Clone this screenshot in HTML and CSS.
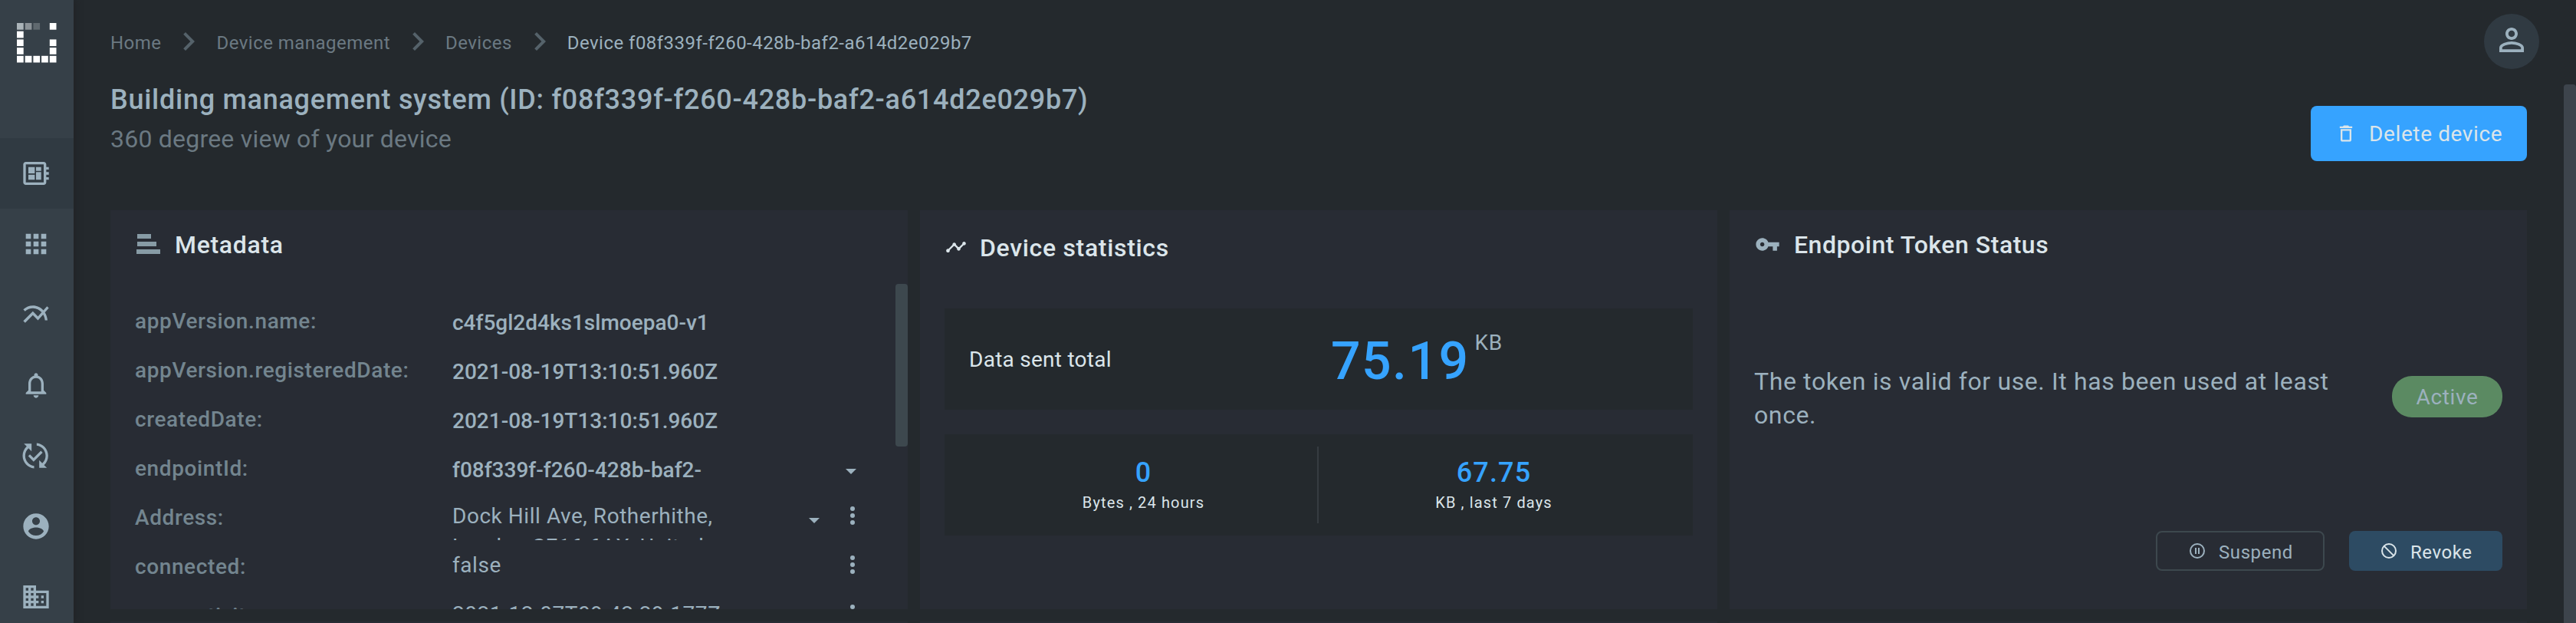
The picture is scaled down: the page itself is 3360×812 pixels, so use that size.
FILE: index.html
```html
<!DOCTYPE html>
<html lang="en">
<head>
<meta charset="utf-8">
<title>Device</title>
<link rel="stylesheet" href="styles.css">
</head>
<body>
<div class="app">
  <nav class="sidebar">
    <div class="brand">
      <svg class="logo" viewBox="0 0 51.6 51.6" fill="#fff">
        <rect width="8.7" height="8.7" fill="#abb4b9"/><rect x="10.7" width="8.7" height="8.7" fill="#8c9398"/><rect x="21.4" width="8.7" height="8.7" fill="#60696f"/><rect x="42.8" width="8.7" height="8.7"/>
        <rect y="10.7" width="8.7" height="8.7"/>
        <rect y="21.4" width="8.7" height="8.7"/><rect x="42.8" y="21.4" width="8.7" height="8.7"/>
        <rect y="32.1" width="8.7" height="8.7"/><rect x="42.8" y="32.1" width="8.7" height="8.7"/>
        <rect y="42.8" width="8.7" height="8.7"/><rect x="10.7" y="42.8" width="8.7" height="8.7"/><rect x="21.4" y="42.8" width="8.7" height="8.7"/><rect x="32.1" y="42.8" width="8.7" height="8.7"/><rect x="42.8" y="42.8" width="8.7" height="8.7"/>
      </svg>
    </div>
    <a class="nav-item active"><svg viewBox="0 0 24 24"><path d="M22 9V7h-2V5c0-1.1-.9-2-2-2H4c-1.1 0-2 .9-2 2v14c0 1.1.9 2 2 2h14c1.1 0 2-.9 2-2v-2h2v-2h-2v-2h2v-2h-2V9h2zm-4 10H4V5h14v14zM6 13h5v4H6v-4zm6-6h4v3h-4V7zM6 7h5v5H6V7zm6 4h4v6h-4v-6z"/></svg></a>
    <a class="nav-item"><svg viewBox="0 0 24 24"><path d="M4 8h4V4H4v4zm6 12h4v-4h-4v4zm-6 0h4v-4H4v4zm0-6h4v-4H4v4zm6 0h4v-4h-4v4zm6-10v4h4V4h-4zm-6 4h4V4h-4v4zm6 6h4v-4h-4v4zm0 6h4v-4h-4v4z"/></svg></a>
    <a class="nav-item"><svg viewBox="0 0 24 24"><path d="M22 6.92l-1.41-1.41-2.85 3.21C15.68 6.4 12.83 5 9.61 5 6.72 5 4.07 6.16 2 8l1.42 1.42C5.12 7.93 7.27 7 9.61 7c2.74 0 5.09 1.26 6.77 3.24l-2.88 3.24-4-4L2 16.99l1.5 1.5 6-6.01 4 4 4.05-4.55c.75 1.35 1.25 2.9 1.44 4.55H21c-.22-2.3-.95-4.39-2.04-6.14L22 6.92z"/></svg></a>
    <a class="nav-item"><svg viewBox="0 0 24 24"><path d="M12 22c1.1 0 2-.9 2-2h-4c0 1.1.9 2 2 2zm6-6v-5c0-3.07-1.63-5.64-4.5-6.32V4c0-.83-.67-1.5-1.5-1.5s-1.5.67-1.5 1.5v.68C7.64 5.36 6 7.92 6 11v5l-2 2v1h16v-1l-2-2zm-2 1H8v-6c0-2.48 1.51-4.5 4-4.5s4 2.02 4 4.5v6z"/></svg></a>
    <a class="nav-item"><svg viewBox="0.5 0 24 24"><path d="M17.66 9.53l-7.07 7.07-4.24-4.24 1.41-1.41 2.83 2.83 5.66-5.66 1.41 1.41zM4 12c0-2.33 1.02-4.42 2.62-5.88L9 8.5v-6H3l2.2 2.2C3.24 6.52 2 9.11 2 12c0 5.19 3.95 9.45 9 9.95v-2.02c-3.94-.49-7-3.86-7-7.93zm18 0c0-5.19-3.95-9.45-9-9.95v2.02c3.94.49 7 3.86 7 7.93 0 2.33-1.02 4.42-2.62 5.88L15 15.5v6h6l-2.2-2.2c1.96-1.82 3.2-4.41 3.2-7.3z"/></svg></a>
    <a class="nav-item"><svg viewBox="0 0 24 24"><path d="M12 2C6.48 2 2 6.48 2 12s4.48 10 10 10 10-4.48 10-10S17.52 2 12 2zm0 3c1.66 0 3 1.34 3 3s-1.34 3-3 3-3-1.34-3-3 1.34-3 3-3zm0 14.2c-2.5 0-4.71-1.28-6-3.22.03-1.99 4-3.08 6-3.08 1.99 0 5.97 1.09 6 3.08-1.29 1.94-3.5 3.22-6 3.22z"/></svg></a>
    <a class="nav-item"><svg viewBox="0 0 24 24"><path d="M12 7V3H2v18h20V7H12zM6 19H4v-2h2v2zm0-4H4v-2h2v2zm0-4H4V9h2v2zm0-4H4V5h2v2zm4 12H8v-2h2v2zm0-4H8v-2h2v2zm0-4H8V9h2v2zm0-4H8V5h2v2zm10 12h-8v-2h2v-2h-2v-2h2v-2h-2V9h8v10zm-2-8h-2v2h2v-2zm0 4h-2v2h2v-2z"/></svg></a>
  </nav>

  <main class="main">
    <div class="topbar">
      <div class="breadcrumb">
        <span>Home</span>
        <svg viewBox="0 0 24 24"><path d="M10 6L8.59 7.41 13.17 12l-4.58 4.59L10 18l6-6z"/></svg>
        <span>Device management</span>
        <svg viewBox="0 0 24 24"><path d="M10 6L8.59 7.41 13.17 12l-4.58 4.59L10 18l6-6z"/></svg>
        <span>Devices</span>
        <svg viewBox="0 0 24 24"><path d="M10 6L8.59 7.41 13.17 12l-4.58 4.59L10 18l6-6z"/></svg>
        <span class="current">Device f08f339f-f260-428b-baf2-a614d2e029b7</span>
      </div>
      <div class="avatar"><svg viewBox="0 0 24 24"><path d="M12 5.9c1.16 0 2.1.94 2.1 2.1s-.94 2.1-2.1 2.1S9.9 9.16 9.9 8s.94-2.1 2.1-2.1m0 9c2.97 0 6.1 1.46 6.1 2.1v1.1H5.9V17c0-.64 3.13-2.1 6.1-2.1M12 4C9.79 4 8 5.79 8 8s1.79 4 4 4 4-1.79 4-4-1.79-4-4-4zm0 9c-2.67 0-8 1.34-8 4v3h16v-3c0-2.66-5.33-4-8-4z"/></svg></div>
    </div>

    <header class="header">
      <div>
        <h1 class="title">Building management system (ID: f08f339f-f260-428b-baf2-a614d2e029b7)</h1>
        <p class="subtitle">360 degree view of your device</p>
      </div>
      <button class="btn-delete"><svg viewBox="0 0 24 24"><path d="M6 19c0 1.1.9 2 2 2h8c1.1 0 2-.9 2-2V7H6v12zM8 9h8v10H8V9zm7.5-5l-1-1h-5l-1 1H5v2h14V4h-3.5z"/></svg><span>Delete device</span></button>
    </header>

    <div class="cards">
      <section class="card">
        <div class="card-head">
          <svg class="icon-bars" viewBox="0 0 31 26"><path d="M1 0h18v6H1zM1 10h25v6H1zM0 20h31v6H0z"/></svg>
          <h2>Metadata</h2>
        </div>
        <div class="meta">
          <div class="meta-row"><span class="key">appVersion.name:</span><span class="val">c4f5gl2d4ks1slmoepa0-v1</span></div>
          <div class="meta-row"><span class="key">appVersion.registeredDate:</span><span class="val">2021-08-19T13:10:51.960Z</span></div>
          <div class="meta-row"><span class="key">createdDate:</span><span class="val">2021-08-19T13:10:51.960Z</span></div>
          <div class="meta-row"><span class="key">endpointId:</span><span class="val">f08f339f-f260-428b-baf2-</span><svg class="caret last" viewBox="0 0 14 7"><path d="M0 0h14L7 7z"/></svg></div>
          <div class="meta-row"><span class="key">Address:</span><span class="val editable">Dock Hill Ave, Rotherhithe, London SE16 6AX, United</span><svg class="caret" viewBox="0 0 14 7"><path d="M0 0h14L7 7z"/></svg><svg class="dots" viewBox="0 0 24 24"><circle cx="12" cy="6" r="2"/><circle cx="12" cy="12" r="2"/><circle cx="12" cy="18" r="2"/></svg></div>
          <div class="meta-row"><span class="key">connected:</span><span class="val editable">false</span><svg class="dots" viewBox="0 0 24 24"><circle cx="12" cy="6" r="2"/><circle cx="12" cy="12" r="2"/><circle cx="12" cy="18" r="2"/></svg></div>
          <div class="meta-row"><span class="key">connectivity:</span><span class="val editable">2021-12-07T09:42:29.177Z</span><svg class="dots" viewBox="0 0 24 24"><circle cx="12" cy="6" r="2"/><circle cx="12" cy="12" r="2"/><circle cx="12" cy="18" r="2"/></svg></div>
          <div class="thumb"></div>
        </div>
      </section>

      <section class="card">
        <div class="card-head stats-head">
          <svg class="icon-timeline" viewBox="0 0 24 24"><path d="M23 8c0 1.1-.9 2-2 2-.18 0-.35-.02-.51-.07l-3.56 3.55c.05.16.07.34.07.52 0 1.1-.9 2-2 2s-2-.9-2-2c0-.18.02-.36.07-.52l-2.55-2.55c-.16.05-.34.07-.52.07s-.36-.02-.52-.07l-4.55 4.56c.05.16.07.33.07.51 0 1.1-.9 2-2 2s-2-.9-2-2 .9-2 2-2c.18 0 .35.02.51.07l4.56-4.55C8.02 9.36 8 9.18 8 9c0-1.1.9-2 2-2s2 .9 2 2c0 .18-.02.36-.07.52l2.55 2.55c.16-.05.34-.07.52-.07s.36.02.52.07l3.55-3.56C19.02 8.35 19 8.18 19 8c0-1.1.9-2 2-2s2 .9 2 2z"/></svg>
          <h2>Device statistics</h2>
        </div>
        <div class="stats">
          <div class="panel total">
            <span class="total-label">Data sent total</span>
            <span class="total-value">75.19</span>
            <span class="total-unit">KB</span>
          </div>
          <div class="panel split">
            <div class="stat"><b>0</b><span>Bytes , 24 hours</span></div>
            <div class="divider"></div>
            <div class="stat"><b>67.75</b><span>KB , last 7 days</span></div>
          </div>
        </div>
      </section>

      <section class="card token">
        <div class="card-head">
          <svg class="icon-key" viewBox="0 0 24 24"><path d="M12.65 10C11.83 7.67 9.61 6 7 6c-3.31 0-6 2.69-6 6s2.69 6 6 6c2.61 0 4.83-1.67 5.65-4H17v4h4v-4h2v-4H12.65zM7 14c-1.1 0-2-.9-2-2s.9-2 2-2 2 .9 2 2-.9 2-2 2z"/></svg>
          <h2>Endpoint Token Status</h2>
        </div>
        <div class="status">
          <p>The token is valid for use. It has been used at least once.</p>
          <span class="pill">Active</span>
        </div>
        <div class="actions">
          <button class="btn outline"><svg viewBox="0 0 20 20"><circle cx="10" cy="10" r="9"/><path d="M8 6v8M12 6v8"/></svg><span>Suspend</span></button>
          <button class="btn solid"><svg viewBox="0 0 20 20"><circle cx="10" cy="10" r="9"/><path d="M3.6 3.6l12.8 12.8"/></svg><span>Revoke</span></button>
        </div>
      </section>

      <section class="card"></section>
      <section class="card"></section>
      <section class="card"></section>
    </div>
    <div class="page-thumb"></div>
  </main>
</div>
</body>
</html>
```
FILE: styles.css
```css
* { box-sizing: border-box; }
html, body { margin: 0; height: 100%; overflow: hidden; }
body { background: #24292d; color: #9cb1be; font-family: Roboto, "Liberation Sans", sans-serif; }
h1, h2, p { margin: 0; }
svg { display: block; flex: none; fill: currentColor; }
button { font: inherit; border: 0; margin: 0; }

.app { display: flex; height: 812px; overflow: hidden; }

/* Sidebar */
.sidebar { flex: none; width: 96px; background: #364048; box-shadow: 2px 0 8px rgba(32, 32, 34, .6); }
.brand { height: 180px; padding: 30px 0 0 22px; }
.logo { width: 51.6px; height: 51.6px; fill: #fff; }
.nav-item { display: flex; align-items: center; height: 92px; padding-left: 27px; }
.nav-item svg { width: 40px; height: 40px; }
.nav-item.active { background: #303a42; }

/* Page */
.main { position: relative; flex: 1; min-width: 0; padding: 0 64px 0 48px; }
.topbar { display: flex; align-items: center; justify-content: space-between; height: 104px; padding-top: 4px; margin-right: -16px; }
.breadcrumb { display: flex; align-items: center; gap: 12px; color: #6b7982; font-size: 24px; line-height: 24px; letter-spacing: .47px; white-space: nowrap; }
.breadcrumb span { padding-top: 4px; }
.breadcrumb svg { width: 48px; height: 48px; color: #55626a; }
.breadcrumb .current { color: #9cb1be; }
.avatar { display: flex; justify-content: center; width: 72px; height: 72px; padding-top: 10px; border-radius: 50%; background: #303a42; }
.avatar svg { width: 48px; height: 48px; }

.header { display: flex; justify-content: space-between; align-items: flex-start; height: 170px; }
.title { font-size: 36px; line-height: 52px; font-weight: 500; letter-spacing: .72px; }
.subtitle { color: #6b7982; font-size: 32px; line-height: 50px; letter-spacing: .22px; }
.btn-delete { display: flex; align-items: center; gap: 16px; width: 282px; height: 72px; margin-top: 34px; padding: 0 0 0 32px; border-radius: 8px; background: #36a3ff; color: #dbe5ea; font-size: 28px; line-height: 32px; letter-spacing: .62px; white-space: nowrap; }
.btn-delete svg { width: 28px; height: 28px; }
.btn-delete span { padding-top: 2px; }

.cards { display: grid; grid-template-columns: repeat(3, 1fr); grid-auto-rows: 520px; gap: 16px; }
.card { min-width: 0; background: #282c34; overflow: hidden; }
.card-head { display: flex; align-items: center; height: 90px; padding-left: 32px; }
.card-head h2 { color: #dbe5ea; font-size: 32px; line-height: 40px; font-weight: 500; letter-spacing: .68px; }
.token .card-head h2 { letter-spacing: .54px; }
.icon-bars { width: 31px; height: 26px; margin: 0 19px 2px 2px; color: #879ba5; }
.icon-timeline { width: 28px; height: 28px; margin: 0 17px 2px 1px; color: #dbe5ea; }
.icon-key { width: 33px; height: 33px; margin: 0 18px 2px 1px; }

/* Metadata */
.meta { position: relative; height: 424px; margin-top: 6px; padding: 16px 54px 0 32px; overflow: hidden; }
.meta-row { display: flex; align-items: center; height: 64px; font-size: 28px; white-space: nowrap; }
.key { flex: none; width: 414px; padding-top: 2px; color: #73858f; font-weight: 500; line-height: 40px; letter-spacing: .61px; }
.val { flex: none; width: 360px; margin-right: auto; padding-top: 6px; font-weight: 500; line-height: 40px; }
.editable { align-self: flex-start; height: 51px; margin-top: 11px; padding: 0; font-weight: 400; letter-spacing: .54px; white-space: normal; overflow: hidden; }
.caret { width: 14px; height: 7px; margin: 9px 25px 0 0; }
.caret.last { margin-right: 13px; }
.dots { width: 36px; height: 36px; margin-bottom: 4px; }
.thumb { position: absolute; top: 0; right: 0; width: 16px; height: 212px; border-radius: 4px; background: #3d484e; }

/* Statistics */
.stats-head { height: 98px; }
.stats { display: flex; flex-direction: column; gap: 32px; padding: 30px 32px 0; }
.panel { display: flex; height: 132px; background: #24292d; }
.total { padding-left: 32px; color: #dbe5ea; }
.total-label { align-self: center; width: 472px; padding-top: 1px; font-size: 28px; line-height: 36px; letter-spacing: .26px; }
.total-value { padding-top: 29px; color: #36a3ff; font-size: 68px; line-height: 80px; font-weight: 500; letter-spacing: 1.4px; }
.total-unit { padding: 25px 0 0 7px; color: #9cb1be; font-size: 28px; line-height: 40px; letter-spacing: .6px; }
.split { padding: 16px 32px; }
.stat { flex: 1; display: flex; flex-direction: column; align-items: center; padding-top: 12px; }
.stat b { color: #36a3ff; font-size: 36px; line-height: 44px; font-weight: 500; letter-spacing: 1.15px; }
.stat span { color: #dbe5ea; font-size: 20px; line-height: 34px; letter-spacing: 1.13px; }
.divider { width: 2px; margin-left: -1px; margin-right: 1px; background: #363c41; }

/* Token */
.token { display: flex; flex-direction: column; }
.status { display: flex; align-items: center; justify-content: space-between; height: 88px; margin-top: 111px; padding: 0 32px; }
.status p { width: 780px; font-size: 32px; line-height: 44px; letter-spacing: .62px; }
.pill { width: 144px; height: 54px; margin-bottom: 4px; border-radius: 26px; background: #5b8a62; font-size: 28px; line-height: 56px; letter-spacing: .62px; text-align: center; }
.actions { display: flex; justify-content: flex-end; gap: 32px; margin: 129px 32px 0; }
.btn { display: flex; align-items: center; gap: 18px; height: 52px; padding: 0; border-radius: 8px; font-size: 24px; line-height: 28px; letter-spacing: .58px; }
.btn svg { width: 20px; height: 20px; fill: none; stroke: currentColor; stroke-width: 2; }
.btn span { padding-top: 3px; }
.outline { width: 220px; padding-left: 42px; border: 2px solid #3d484e; background: transparent; color: #9cb1be; }
.solid { width: 200px; padding-left: 42px; background: #2d4b63; color: #dbe5ea; }

.page-thumb { position: absolute; top: 110px; right: 0; width: 16px; height: 710px; border-radius: 4px; background: #3d444c; }
```
